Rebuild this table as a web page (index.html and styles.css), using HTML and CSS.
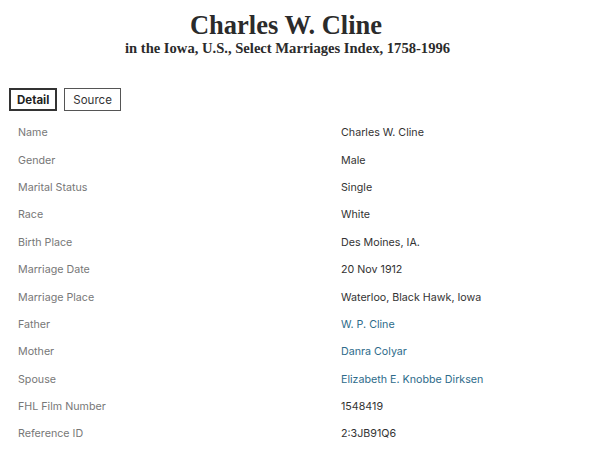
FILE: index.html
```html
<!DOCTYPE html>
<html>
<head>
<meta charset="utf-8">
<link rel="stylesheet" href="styles.css">
</head>
<body>
<header class="head">
  <h1 class="title">Charles W. Cline</h1>
  <p class="subtitle">in the Iowa, U.S., Select Marriages Index, 1758-1996</p>
</header>
<nav class="tabs">
  <span class="tab active">Detail</span>
  <span class="tab">Source</span>
</nav>
<table class="facts">
  <tr><th>Name</th><td>Charles W. Cline</td></tr>
  <tr><th>Gender</th><td>Male</td></tr>
  <tr><th>Marital Status</th><td>Single</td></tr>
  <tr><th>Race</th><td>White</td></tr>
  <tr><th>Birth Place</th><td>Des Moines, IA.</td></tr>
  <tr><th>Marriage Date</th><td>20 Nov 1912</td></tr>
  <tr><th>Marriage Place</th><td>Waterloo, Black Hawk, Iowa</td></tr>
  <tr><th>Father</th><td><a class="link">W. P. Cline</a></td></tr>
  <tr><th>Mother</th><td><a class="link">Danra Colyar</a></td></tr>
  <tr><th>Spouse</th><td><a class="link">Elizabeth E. Knobbe Dirksen</a></td></tr>
  <tr><th>FHL Film Number</th><td>1548419</td></tr>
  <tr><th>Reference ID</th><td>2:3JB91Q6</td></tr>
</table>
</body>
</html>
```
FILE: styles.css
```css
html, body { margin: 0; padding: 0; background: #fff; }
body {
  font-family: Inter, "Noto Sans", sans-serif;
  color: #333;
  padding: 0 9px;
}
.head { text-align: center; padding-top: 10px; margin-left: -28px; }
.title {
  font-family: "Liberation Serif", serif;
  font-weight: bold;
  font-size: 26.5px;
  line-height: 30px;
  margin: 0;
  color: #2b2b2b;
}
.subtitle {
  font-family: "Liberation Serif", serif;
  font-weight: bold;
  font-size: 14.6px;
  line-height: 17px;
  margin: 0 0 0 3px;
  color: #2b2b2b;
}
.tabs { display: flex; gap: 7px; margin-top: 31px; }
.tab {
  border: 1px solid #555;
  font-size: 11.5px;
  line-height: 14px;
  padding: 4px 8px 3px;
  color: #333;
}
.tab.active { font-weight: bold; color: #222; border: 2px solid #333; padding: 3px 6px 2px; }
.facts { border-collapse: collapse; margin-top: 8px; width: 100%; }
.facts th, .facts td {
  font-size: 10.7px;
  text-align: left;
  padding: 0;
  height: 27.4px;
  vertical-align: middle;
}
.facts th { font-weight: normal; color: #777; padding-left: 9px; width: 323px; }
.facts td { color: #333; }
.link { color: #2d6b8a; }
```
